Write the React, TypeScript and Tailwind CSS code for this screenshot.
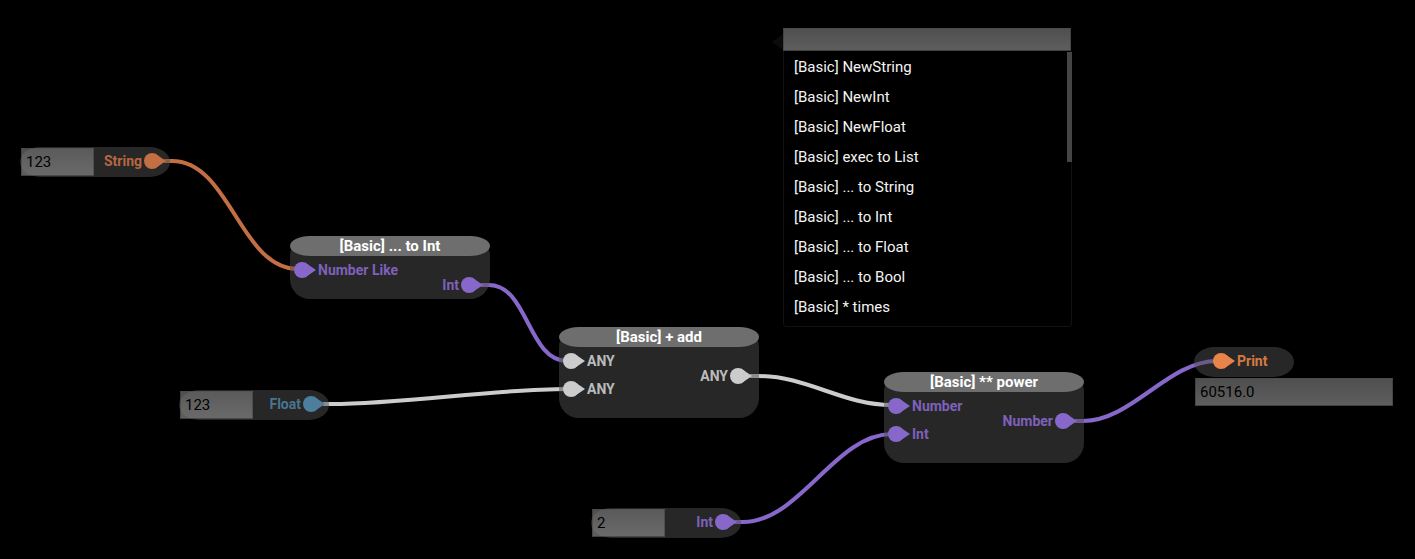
import React, { useState } from "react";

type Tone = "string" | "number" | "any" | "float" | "print";

const textTone: Record<Tone, string> = {
  string: "text-[#c46e44]",
  number: "text-[#8768ca]",
  any: "text-[#cccccc]",
  float: "text-[#4d7e9e]",
  print: "text-[#e88449]",
};

type Port = { label: string; tone: Tone };

function Pin() {
  return (
    <svg className="h-4 w-[22px] shrink-0" viewBox="0 0 22 16" fill="currentColor" aria-hidden="true">
      <circle cx="8" cy="8" r="8" />
      <path d="M11 .6 22 8 11 15.4Z" />
    </svg>
  );
}

function InPort({ label, tone }: Port) {
  return (
    <div className={`flex h-7 items-center gap-0.5 ${textTone[tone]}`}>
      <Pin />
      <span className="text-sm leading-4 font-bold opacity-90">{label}</span>
    </div>
  );
}

function OutPort({ label, tone }: Port) {
  return (
    <div className={`flex h-7 items-center justify-end gap-0.5 ${textTone[tone]}`}>
      <span className="text-sm leading-4 font-bold opacity-90">{label}</span>
      <Pin />
    </div>
  );
}

function OperationNode({ place, title, inputs, output }: { place: string; title: string; inputs: Port[]; output: Port }) {
  return (
    <section className={`absolute w-[200px] rounded-[20px] bg-[#4e4e4e]/50 ${place}`}>
      <h2 className="h-5 rounded-[20px/10px] bg-[#6e6e6e] text-center text-[15px] leading-5 font-bold text-white">{title}</h2>
      <div className="flex justify-between pr-[7px] pl-1">
        <div className="pb-[15px]">
          {inputs.map((port, i) => (
            <InPort key={i} {...port} />
          ))}
        </div>
        <div className="pt-[15px]">
          <OutPort {...output} />
        </div>
      </div>
    </section>
  );
}

const field =
  "border border-black/20 bg-linear-to-b from-[#717171]/70 to-[#868686]/70 px-1 text-[15px] text-black outline-none";

function ValueNode({ place, port, initial }: { place: string; port: Port; initial: string }) {
  const [value, setValue] = useState(initial);
  return (
    <section className={`absolute flex h-[30px] w-[150px] justify-between rounded-[20px/15px] bg-[#4e4e4e]/50 pr-1 pl-px ${place}`}>
      <input
        aria-label={port.label}
        className={`mt-px h-7 w-[73px] ${field}`}
        value={value}
        onChange={(e) => setValue(e.target.value)}
      />
      <OutPort {...port} />
    </section>
  );
}

const wires = [
  { d: "M164 161H172C230 161 240 269 298 269", color: "#c46e44" },
  { d: "M481 285H489C528 285 528 361 567 361", color: "#8768ca" },
  { d: "M323 404H331C405 404 493 389 567 389", color: "#cccccc" },
  { d: "M750 376H758C808 376 842 405 892 405", color: "#cccccc" },
  { d: "M735 522H743C800 522 835 434 892 434", color: "#8768ca" },
  { d: "M1075 421H1083C1132 421 1168 361 1217 361", color: "#8768ca" },
];

const entries = [
  "[Basic] NewString",
  "[Basic] NewInt",
  "[Basic] NewFloat",
  "[Basic] exec to List",
  "[Basic] ... to String",
  "[Basic] ... to Int",
  "[Basic] ... to Float",
  "[Basic] ... to Bool",
  "[Basic] * times",
];

function NodeMenu() {
  const [query, setQuery] = useState("");
  const shown = entries.filter((e) => e.toLowerCase().includes(query.toLowerCase()));
  return (
    <div className="absolute top-7 left-[772px] flex w-[300px] items-start">
      <svg className="mt-1.5 h-4 w-[11px] shrink-0" viewBox="0 0 11 16" fill="#0c0c0c" aria-hidden="true">
        <path d="M11 0 0 8 11 16Z" />
      </svg>
      <div className="min-w-0 flex-1">
        <div className="pr-px">
          <input
            aria-label="Search nodes"
            className={`block h-[23px] w-full ${field}`}
            value={query}
            onChange={(e) => setQuery(e.target.value)}
          />
        </div>
        <div className="flex items-start justify-between rounded-b border border-t-0 border-[#121212]">
          <ul className="pt-px pb-1 pl-2.5">
            {shown.map((entry) => (
              <li key={entry}>
                <button type="button" className="block h-[30px] text-left text-[15px] leading-[30px] text-[#f4f4f4]">
                  {entry}
                </button>
              </li>
            ))}
          </ul>
          <div className="mt-px -mr-px h-[110px] w-[5px] bg-[#454545]" />
        </div>
      </div>
    </div>
  );
}

export default function App() {
  return (
    <main className="relative min-h-screen w-full overflow-hidden bg-black font-[Roboto,sans-serif]">
      <svg className="absolute top-0 left-0 h-full w-full" fill="none" strokeWidth="4" aria-hidden="true">
        {wires.map((wire) => (
          <path key={wire.d} d={wire.d} stroke={wire.color} />
        ))}
      </svg>
      <ValueNode place="top-[147px] left-5" port={{ label: "String", tone: "string" }} initial="123" />
      <ValueNode place="top-[390px] left-[179px]" port={{ label: "Float", tone: "float" }} initial="123" />
      <ValueNode place="top-[508px] left-[591px]" port={{ label: "Int", tone: "number" }} initial="2" />
      <OperationNode
        place="top-[236px] left-[290px]"
        title="[Basic] ... to Int"
        inputs={[{ label: "Number Like", tone: "number" }]}
        output={{ label: "Int", tone: "number" }}
      />
      <OperationNode
        place="top-[327px] left-[559px]"
        title="[Basic] + add"
        inputs={[
          { label: "ANY", tone: "any" },
          { label: "ANY", tone: "any" },
        ]}
        output={{ label: "ANY", tone: "any" }}
      />
      <OperationNode
        place="top-[372px] left-[884px]"
        title="[Basic] ** power"
        inputs={[
          { label: "Number", tone: "number" },
          { label: "Int", tone: "number" },
        ]}
        output={{ label: "Number", tone: "number" }}
      />
      <section className="absolute top-[347px] left-[1194px]">
        <div className="h-[30px] w-[100px] rounded-[20px/15px] bg-[#4e4e4e]/50 pl-[19px]">
          <InPort label="Print" tone="print" />
        </div>
        <input aria-label="Print" readOnly className={`mt-px ml-px block h-7 w-[198px] ${field}`} value="60516.0" />
      </section>
      <NodeMenu />
    </main>
  );
}
